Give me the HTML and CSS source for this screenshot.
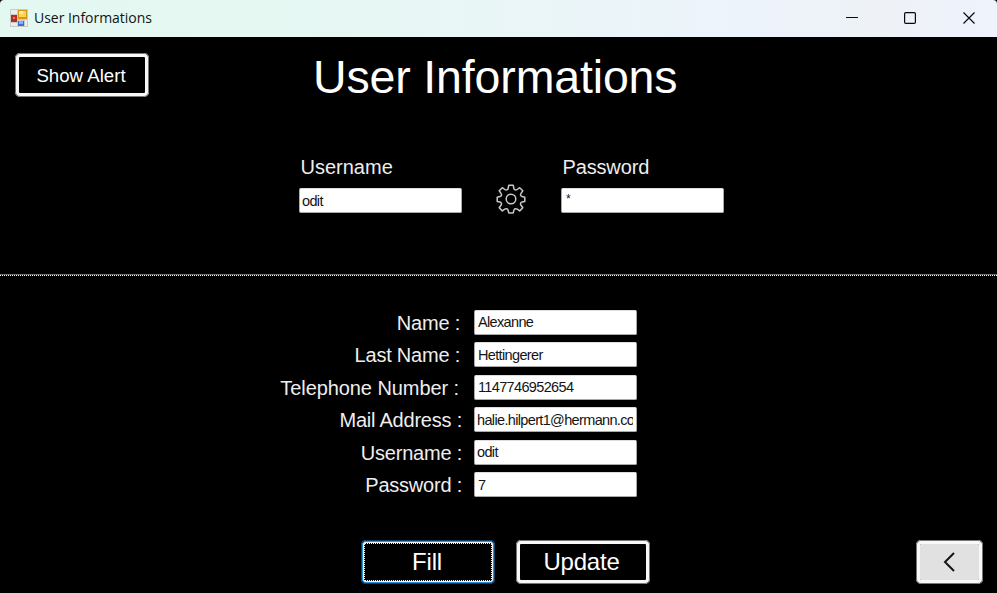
FILE: index.html
```html
<!DOCTYPE html>
<html lang="en">
<head>
<meta charset="utf-8">
<title>User Informations</title>
<link rel="stylesheet" href="styles.css">
</head>
<body>
<div class="window">
  <header class="titlebar">
    <svg class="app-icon" width="18" height="18" viewBox="0 0 18 18">
      <path fill="#c9cbcc" d="M0 0h18v18H0z"/>
      <path fill="#eceeee" d="M1 1h6v4H1zM1 14h6v3H1zM15 11h2v6h-2z"/>
      <path fill="#b52d20" d="M1 6h6v7H1z"/><path fill="#e8796a" d="M3 8h2v2H3z"/>
      <path fill="#d49718" d="M8 1h9v9H8z"/><path fill="#ffd455" d="M9 2h7v6H9z"/><path fill="#ffeb9c" d="M9 2h4v3H9z"/>
      <path fill="#3b70cf" d="M8 12h6v5H8z"/><path fill="#86afff" d="M9 12h4v3H9z"/>
    </svg>
    <span class="caption">User Informations</span>
    <svg class="controls" width="130" height="14" viewBox="0 0 130 14" fill="none" stroke="#080a0c">
      <path d="M0 6.500h12"/>
      <rect x="58.600" y="1.600" width="10.800" height="10.800" rx="1.200" stroke-width="1.200"/>
      <path d="M117.500 1.500l11 11M128.500 1.500l-11 11" stroke-width="1.200"/>
    </svg>
  </header>
  <main class="content">
    <section class="login">
      <div class="heading">
        <button class="btn alert">Show Alert</button>
        <h1>User Informations</h1>
      </div>
      <div class="credentials">
        <label class="cred"><span>Username</span><input class="field" value="odit"></label>
        <svg class="gear" width="30" height="30" viewBox="0 0 30 30" fill="none" stroke="#c8c8c8" stroke-width="1.500" stroke-linejoin="round">
          <circle cx="15" cy="15" r="4.800"/>
          <path d="M12.800 1.200h4.400l.7 3.300q.3 1.100 1.300 1.400t2-.4l2.500-1.800 3.100 3.100-1.800 2.600q-.7 1-.4 1.900t1.400 1.300l2.800.6v4.200l-2.800.6q-1.100.3-1.400 1.300t.4 1.900l1.800 2.600-3.100 3.100-2.500-1.800q-1-.7-2-.3t-1.300 1.400l-.7 2.700h-4.400l-.7-2.700q-.3-1-1.300-1.400t-2 .3l-2.500 1.800-3.100-3.100L5 21.200q.7-1 .4-1.900T4 18l-2.800-.6v-4.200L4 12.600q1.100-.3 1.400-1.300T5 9.400L3.200 6.800l3.100-3.100 2.500 1.800q1 .7 2 .4t1.300-1.400z"/>
        </svg>
        <label class="cred password"><span>Password</span><input class="field" value="*"></label>
      </div>
    </section>
    <section class="details">
      <div class="form">
        <span class="label l2">Name :</span><input class="field" value="Alexanne">
        <span class="label l2">Last Name :</span><input class="field" value="Hettingerer">
        <span class="label l3">Telephone Number :</span><input class="field" value="1147746952654">
        <span class="label">Mail Address :</span><input class="field mail" value="halie.hilpert1@hermann.com">
        <span class="label">Username :</span><input class="field mail" value="odit">
        <span class="label">Password :</span><input class="field" value="7">
      </div>
      <div class="actions">
        <button class="btn large focused"><span class="focus-ring">Fill</span></button>
        <button class="btn large">Update</button>
        <button class="btn back" aria-label="Back"><svg width="12" height="20" viewBox="0 0 12 20" fill="none" stroke="#151515" stroke-width="2"><path d="M11 1L2 10l9 9"/></svg></button>
      </div>
    </section>
  </main>
</div>
</body>
</html>
```
FILE: styles.css
```css
* { box-sizing: border-box; }
body { margin: 0; background: #000; font-family: "Liberation Sans", Arial, sans-serif; color: #fff; }
.window { width: 997px; height: 593px; display: flex; flex-direction: column; overflow: hidden; background: #000; }
.titlebar { height: 37px; flex: none; display: flex; align-items: center; padding: 0 21px 2px 10px; border-radius: 4px 4px 0 0; background: linear-gradient(90deg, #e3f8f0 0%, #e6f8f3 30%, #edf3fb 75%, #eef2f7 88%, #eef3fc 100%); }
.caption { margin-left: 6px; color: #101414; font: 14px/20px "Open Sans", sans-serif; letter-spacing: -.03px; }
.controls { margin-left: auto; }
.content { flex: 1; display: flex; flex-direction: column; }
.login { height: 239px; flex: none; border-bottom: 1px dotted #fff; background: linear-gradient(#707070, #707070) bottom / 100% 1px no-repeat; padding-top: 16px; }
.heading { display: flex; height: 100px; padding-left: 15px; }
h1 { margin: -2px 0 0 161px; font-size: 46.5px; line-height: 52px; letter-spacing: -.15px; font-weight: 400; white-space: nowrap; padding-left: 3px; }
.btn { display: flex; align-items: center; justify-content: center; width: 134px; height: 44px; padding: 0; border: 4px solid #f8f8f8; outline: 1px solid #777; outline-offset: -1px; border-radius: 5px; background: #000; background-clip: padding-box; color: #fff; font: 18.67px "Liberation Sans", Arial, sans-serif; }
.alert { padding: 1px 2px 0 0; }
.credentials { display: flex; align-items: flex-start; padding-left: 299px; }
.cred { display: flex; flex-direction: column; font-size: 20px; line-height: 24px; color: #eee; }
.cred span { padding-left: 1.5px; margin: 2px 0 9px; }
.password span { letter-spacing: -.15px; }
.password .field { font-size: 12px; padding: 0 3px 3px 4px; }
.gear { margin: 31px 35px 0 34px; }
.field { width: 163px; height: 25px; border: 1px solid #aaa; border-top-color: #ddd; border-radius: 2px; padding: 0 3px 0 2px; background: #fff; color: #151515; font: 14.5px "Liberation Sans", Arial, sans-serif; letter-spacing: -.65px; outline: none; }
.form .field { padding-left: 3px; }
.form .mail { padding-left: 2px; }
.details { flex: 1; display: flex; flex-direction: column; }
.form { display: grid; grid-template-columns: 462px 163px; grid-auto-rows: 25px; row-gap: 7.5px; column-gap: 12px; margin-top: 33.5px; }
.label { justify-self: end; font-size: 20px; line-height: 26.6px; letter-spacing: -.22px; color: #eee; white-space: nowrap; }
.l2 { margin-right: 2px; }
.l3 { margin-right: 3px; letter-spacing: -.08px; }
.actions { display: flex; gap: 21px; padding: 0 14px 0 361px; margin-top: 42.5px; }
.large { font-size: 24px; padding-right: 3px; letter-spacing: -.2px; }
.focused { border: 2px solid #2c8fdc; outline: 1px solid #0b3f68; outline-offset: -1px; padding: 0; }
.focus-ring { display: flex; align-items: center; justify-content: center; width: 130px; height: 40px; border: 1px solid #eee; outline: 1px dotted #fff; outline-offset: -2px; border-radius: 2px; padding-right: 2px; }
.back { margin-left: auto; width: 67px; background-color: #e1e1e1; padding-right: 2px; }
```
